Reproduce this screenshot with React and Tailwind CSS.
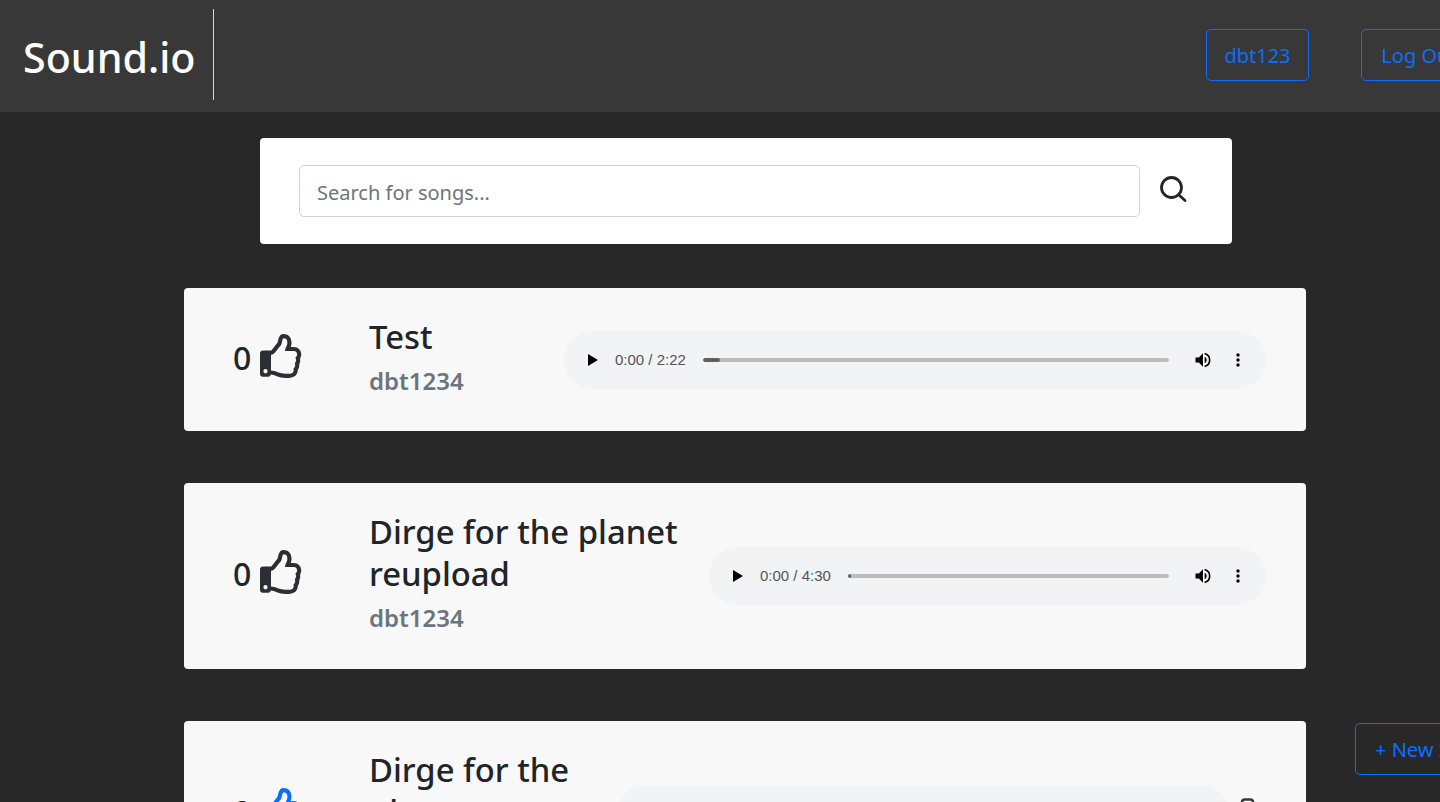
import React from "react";
import { FaRegThumbsUp } from "react-icons/fa";

const font = "font-['Noto_Sans','Open_Sans',sans-serif]";

function AudioBar({ width, time, progress }) {
  return (
    <div className={`${width} h-[58px] shrink-0 ml-auto rounded-full bg-[#f1f3f4] flex items-center pl-6 pr-[26px] font-['Liberation_Sans',sans-serif]`}>
      <svg width="10" height="12" viewBox="0 0 10 12" className="shrink-0 text-black" fill="currentColor">
        <path d="M0 0 L10 6 L0 12 Z" />
      </svg>
      <span className="ml-[17px] text-[15px] leading-none text-[#555] whitespace-nowrap">{time}</span>
      <div className="ml-[17px] flex-1 h-1 rounded-full bg-[#bdbdbd] overflow-hidden">
        <div className={`${progress} h-full bg-[#5f5f5f] rounded-full`} />
      </div>
      <svg width="20" height="20" viewBox="0 0 24 24" className="ml-[24px] shrink-0 text-black" fill="currentColor">
        <path d="M3 9v6h4l5 5V4L7 9H3zm13.5 3A4.5 4.5 0 0 0 14 7.97v8.05A4.5 4.5 0 0 0 16.5 12zM14 3.23v2.06a7 7 0 0 1 0 13.42v2.06a9 9 0 0 0 0-17.54z" />
      </svg>
      <svg width="4" height="14" viewBox="0 0 4 14" className="ml-[23px] shrink-0 text-black" fill="currentColor">
        <circle cx="2" cy="2" r="1.7" />
        <circle cx="2" cy="7" r="1.7" />
        <circle cx="2" cy="12" r="1.7" />
      </svg>
    </div>
  );
}

function SongCard({ title, titleWidth, audio, thumbClass, trailing, padClass }) {
  return (
    <div className={`${padClass} ml-[184px] w-[1122px] shrink-0 bg-[#f8f8f8] rounded-[4px] flex items-center pl-[49px] pr-10 pt-[29px] text-[#212529]`}>
      <div className="w-[136px] shrink-0 flex items-center -mt-[3px]">
        <span className="text-[32px] leading-none font-medium">0</span>
        <FaRegThumbsUp className={`${thumbClass} ml-[9px] w-[44px] h-[44px] -mt-[5px] shrink-0`} />
      </div>
      <div className={`${titleWidth} shrink-0`}>
        <div className="text-[32.8px] leading-[42px] font-medium -mt-[1px]">{title}</div>
        <div className="text-[24px] leading-[43px] font-semibold text-[#6c757d] mt-[1px]">dbt1234</div>
      </div>
      {audio}
      {trailing}
    </div>
  );
}

export default function App() {
  return (
    <div className={`${font} relative w-[1440px] h-[802px] overflow-hidden bg-[#282828] flex flex-col`}>
      <header className="h-[112px] shrink-0 bg-[#383838] flex items-center pl-[23px]">
        <div className="text-white text-[41.2px] font-medium leading-none w-[172px] mt-[3px] shrink-0 whitespace-nowrap">Sound.io</div>
        <div className="ml-[18px] w-px h-[91px] -mt-[3px] shrink-0 bg-[#d8d8d8]" />
        <div className="flex gap-[52px] pl-[992px] shrink-0 -mt-[2px]">
          <button className="h-[52px] w-[103px] shrink-0 pt-[2px] rounded-[5px] border border-[#0d6efd] text-[#0d6efd] text-[20px] leading-none">dbt123</button>
          <button className="h-[52px] w-[116px] shrink-0 pt-[2px] rounded-[5px] border border-[#0d6efd] text-[#0d6efd] text-[20px] leading-none">Log Out</button>
        </div>
      </header>

      <div className="mt-[26px] ml-[260px] w-[972px] h-[106px] shrink-0 bg-white rounded-[4px] flex items-center pl-[39px]">
        <input
          placeholder="Search for songs..."
          className="w-[841px] h-[52px] rounded-[5px] border border-[#ced4da] bg-white px-[17px] pt-[2px] text-[20px] text-[#212529] placeholder:text-[#6c757d] outline-none"
        />
        <svg width="30" height="30" viewBox="0 0 30 30" fill="none" stroke="#212529" strokeWidth="2.8" strokeLinecap="round" className="ml-[19px] -mt-[2px]">
          <circle cx="12.5" cy="12.5" r="10" />
          <path d="M20.5 20.5 L26 25.5" />
        </svg>
      </div>

      <div className="flex flex-col gap-[52px] mt-[44px]">
        <SongCard
          title="Test"
          titleWidth="w-[180px]"
          padClass="pb-[29px]"
          thumbClass="text-[#2b2e33]"
          audio={<AudioBar width="w-[702px]" time="0:00 / 2:22" progress="w-[17px]" />}
        />
        <SongCard
          title="Dirge for the planet reupload"
          titleWidth="w-[320px]"
          padClass="pb-[30px]"
          thumbClass="text-[#2b2e33]"
          audio={<AudioBar width="w-[557px]" time="0:00 / 4:30" progress="w-[3px]" />}
        />
        <SongCard
          title="Dirge for the planet"
          titleWidth="w-[230px]"
          padClass="pb-[30px]"
          thumbClass="text-[#0d6efd]"
          audio={<AudioBar width="w-[613px]" time="0:00 / 4:30" progress="w-[3px]" />}
          trailing={
            <svg width="15" height="32" viewBox="0 0 15 32" fill="none" stroke="#343a40" strokeWidth="2.6" className="ml-[10px] mr-[11px] shrink-0">
              <path d="M2 8V4a2.5 2.5 0 0 1 2.5-2.5h6A2.5 2.5 0 0 1 13 4v4" />
              <path d="M0 8h15M2 8l1 22h9l1-22" />
            </svg>
          }
        />
      </div>

      <button className="absolute left-[1355px] top-[723px] w-[120px] h-[52px] pt-[2px] rounded-[5px] border border-[#0d6efd] text-[#0d6efd] text-[20px] leading-none text-left pl-[19px] whitespace-nowrap">
        + New Song
      </button>
    </div>
  );
}
